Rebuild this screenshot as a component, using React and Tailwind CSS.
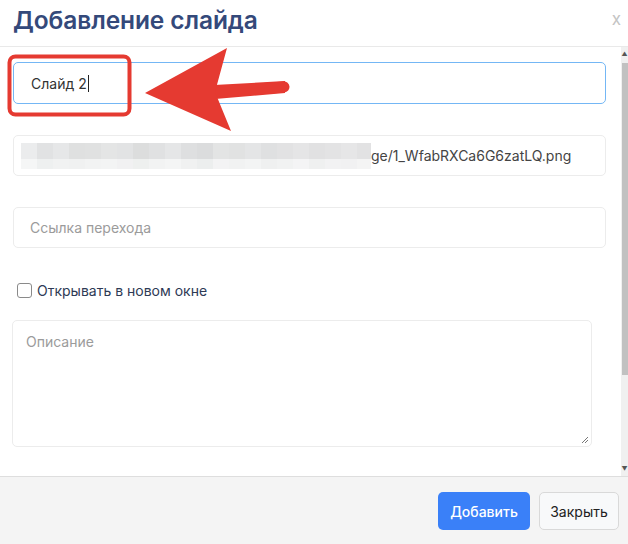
import { useState } from 'react'

const MOSAIC_TOP = ['#ebeced', '#e1e2e3', '#e6e7e8', '#dfe0e0', '#e0e1e1', '#e4e5e5', '#e2e3e4', '#dcdddd', '#e0e1e2', '#e5e6e7', '#dedfe0', '#dbdcdd', '#e3e4e4', '#e1e2e2', '#e4e5e6', '#dfe0e1', '#e2e2e3', '#e5e5e6', '#e1e1e2', '#e3e3e4', '#e6e6e7', '#e2e2e3']
const MOSAIC_BOTTOM = ['#f5f6f6', '#eef0f0', '#f1f2f2', '#f0f1f1', '#f2f3f3', '#f3f4f4', '#f1f1f2', '#eef0ef', '#f2f3f3', '#f4f5f5', '#f0f1f1', '#eceeee', '#f3f3f4', '#f1f2f2', '#f3f4f4', '#eff0f0', '#f1f2f2', '#f4f4f5', '#eff0f0', '#f2f2f3', '#f1f1f2', '#f4f4f4']

function Mosaic() {
  return (
    <svg width="350" height="26" className="shrink-0">
      {MOSAIC_TOP.map((c, i) => (
        <rect key={'t' + i} x={i * 16} y={0} width={16} height={16} fill={c} />
      ))}
      {MOSAIC_BOTTOM.map((c, i) => (
        <rect key={'b' + i} x={i * 16} y={16} width={16} height={10} fill={c} />
      ))}
    </svg>
  )
}

function Annotation() {
  return (
    <svg className="absolute left-0 top-0 pointer-events-none" width="300" height="140">
      <rect x="9.5" y="56.5" width="120" height="58" rx="6" fill="none" stroke="#e53a31" strokeWidth="4" />
      <path d="M214 85 L285 81 L285 93 L215 99 Z" fill="#e53a31" />
      <line x1="284" y1="87" x2="220" y2="92" stroke="#e53a31" strokeWidth="11" strokeLinecap="round" />
      <polygon points="145,93 227,48 215,92 231,131" fill="#e53a31" />
    </svg>
  )
}

export default function App() {
  const [title] = useState('Слайд 2')
  const [newWindow, setNewWindow] = useState(false)

  return (
    <div className="w-[628px] h-[544px] bg-white flex flex-col overflow-hidden relative" style={{ fontFamily: 'Inter, "Noto Sans", sans-serif' }}>
      <div className="h-[47px] shrink-0 flex items-start justify-between border-b border-[#e9e9e9] pl-[13px] pr-[7px]">
        <h2 className="text-[24.5px] leading-none font-semibold text-[#34497a] mt-[8px] tracking-[-0.1px]">Добавление слайда</h2>
        <button className="text-[#c4c4c4] text-[17px] mt-[11px] leading-none">x</button>
      </div>

      <div className="flex-1 flex min-h-0 border-b border-[#dedede]">
        <div className="flex-1 pl-[13px] pr-[15px] pt-[15px] flex flex-col">
          <div className="h-[42px] rounded-[5px] border border-[#74b7f5] flex items-center pl-[17px] text-[14px] text-[#333]">
            <span>{title}</span>
            <span className="w-px h-[17px] bg-[#222] ml-[1px]" />
          </div>

          <div className="mt-[31px] h-[41px] rounded-[5px] border border-[#ececec] flex items-center pl-[7px] text-[14px] text-[#444] overflow-hidden whitespace-nowrap">
            <Mosaic />
            <span>ge/1_WfabRXCa6G6zatLQ.png</span>
          </div>

          <div className="mt-[31px] h-[41px] rounded-[5px] border border-[#ececec] flex items-center pl-[16px] text-[14px] text-[#9b9b9b]">
            Ссылка перехода
          </div>

          <label className="mt-[32px] flex items-center gap-[5px] pl-[4px] text-[14px] text-[#2e3a55] cursor-pointer">
            <span
              onClick={() => setNewWindow(!newWindow)}
              className="w-[15px] h-[15px] rounded-[3px] border border-[#8a8a8a] bg-white"
            />
            Открывать в новом окне
          </label>

          <div className="mt-[19px] mr-[14px] -ml-px h-[127px] rounded-[5px] border border-[#ececec] relative pl-[13px] pt-[10px] text-[14px] text-[#9b9b9b]">
            Описание
            <svg className="absolute right-[2px] bottom-[2px]" width="8" height="8">
              <line x1="1" y1="7" x2="7" y2="1" stroke="#777" strokeWidth="1" />
              <line x1="4" y1="7" x2="7" y2="4" stroke="#777" strokeWidth="1" />
            </svg>
          </div>
        </div>

        <div className="w-[7px] bg-[#f0f0f0] flex flex-col items-center relative">
          <div className="h-[8px] text-[6px] leading-[8px] text-[#555] mt-[3px]">▲</div>
          <div className="w-[6px] ml-[1px] h-[312px] mt-[5px] bg-[#c1c1c1]" />
          <div className="flex-1" />
          <div className="h-[8px] text-[6px] leading-[8px] text-[#555] mb-[3px]">▼</div>
        </div>
      </div>

      <div className="h-[67px] shrink-0 bg-[#f4f4f4] flex items-start justify-end gap-[9px] pt-[15px] pr-[9px]">
        <button className="h-[38px] w-[92px] rounded-[5px] bg-[#3a80f8] text-white text-[14px] font-medium">Добавить</button>
        <button className="h-[38px] w-[80px] rounded-[5px] bg-[#f8f9fa] border border-[#d9d9d9] text-[#222] text-[14px]">Закрыть</button>
      </div>

      <Annotation />
    </div>
  )
}
